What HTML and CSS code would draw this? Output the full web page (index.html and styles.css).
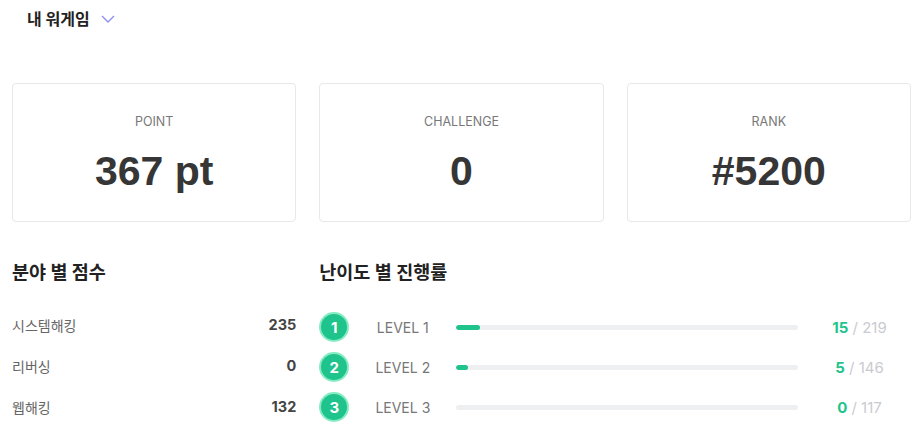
FILE: index.html
```html
<!DOCTYPE html>
<html lang="ko">
<head>
<meta charset="utf-8">
<link rel="stylesheet" href="styles.css">
</head>
<body>
<div class="page">
  <div class="header">
    <span class="title">내 워게임</span>
    <svg class="chev" width="14" height="8" viewBox="0 0 14 8"><path d="M1 1 L7 7 L13 1" fill="none" stroke="#8c8ef2" stroke-width="1.4"/></svg>
  </div>
  <div class="cards">
    <div class="card"><div class="label">POINT</div><div class="value">367 pt</div></div>
    <div class="card"><div class="label">CHALLENGE</div><div class="value">0</div></div>
    <div class="card"><div class="label">RANK</div><div class="value">#5200</div></div>
  </div>
  <div class="lower">
    <div class="field">
      <h3 class="sec">분야 별 점수</h3>
      <div class="frow"><span class="fname">시스템해킹</span><span class="fval">235</span></div>
      <div class="frow"><span class="fname">리버싱</span><span class="fval">0</span></div>
      <div class="frow"><span class="fname">웹해킹</span><span class="fval">132</span></div>
    </div>
    <div class="levels">
      <h3 class="sec">난이도 별 진행률</h3>
      <div class="lrow">
        <span class="badge">1</span><span class="lname">LEVEL 1</span>
        <div class="bar"><div class="fill" style="width:6.85%"></div></div>
        <span class="count"><b>15</b> / 219</span>
      </div>
      <div class="lrow">
        <span class="badge">2</span><span class="lname">LEVEL 2</span>
        <div class="bar"><div class="fill" style="width:3.42%"></div></div>
        <span class="count"><b>5</b> / 146</span>
      </div>
      <div class="lrow">
        <span class="badge">3</span><span class="lname">LEVEL 3</span>
        <div class="bar"><div class="fill" style="width:0%"></div></div>
        <span class="count"><b>0</b> / 117</span>
      </div>
    </div>
  </div>
</div>
</body>
</html>
```
FILE: styles.css
```css
* { box-sizing: border-box; }
body {
  margin: 0;
  background: #fff;
  font-family: Inter, "Noto Sans CJK KR", sans-serif;
  color: #333;
}
.page { padding: 0 10px 0 12px; }
.header {
  display: flex;
  align-items: center;
  gap: 11px;
  height: 36px;
  padding-left: 15px;
}
.title {
  font-size: 16px;
  font-weight: 700;
  color: #222;
}
.chev { margin-top: 1px; }
.cards {
  display: grid;
  grid-template-columns: repeat(3, 1fr);
  gap: 23px;
  margin-top: 47px;
}
.card {
  border: 1px solid #e8e8ea;
  border-radius: 4px;
  height: 139px;
  display: flex;
  flex-direction: column;
  align-items: center;
  padding-top: 30px;
}
.label {
  font-size: 12.5px;
  color: #777;
  line-height: 16px;
}
.value {
  font-family: "Liberation Sans", Arial, sans-serif;
  font-weight: 700;
  font-size: 41px;
  color: #363636;
  margin-top: 19px;
  line-height: 44px;
}
.lower {
  display: grid;
  grid-template-columns: repeat(3, 1fr);
  gap: 23px;
  margin-top: 38px;
}
.levels { grid-column: span 2; }
.sec {
  margin: 0;
  font-size: 18.5px;
  font-weight: 700;
  color: #222;
  line-height: 24px;
  height: 44px;
}
.frow {
  display: flex;
  justify-content: space-between;
  align-items: center;
  height: 41px;
}
.fname { font-size: 14px; color: #666; }
.fval { font-size: 14.5px; font-weight: 700; color: #444; }
.lrow {
  display: flex;
  align-items: center;
  height: 40px;
}
.lrow:first-of-type { margin-top: 3px; }
.badge {
  width: 30px;
  height: 30px;
  border-radius: 50%;
  background: #1fc48c;
  border: 2px solid #86ebc2;
  color: #fff;
  font-weight: 700;
  font-size: 15px;
  display: flex;
  align-items: center;
  justify-content: center;
}
.lname {
  width: 107px;
  text-align: center;
  font-size: 14px;
  color: #777;
}
.bar {
  flex: 1;
  height: 5px;
  border-radius: 3px;
  background: #eeeff1;
  overflow: hidden;
}
.fill {
  height: 100%;
  background: #1fc48c;
  border-radius: 3px;
}
.count {
  width: 113px;
  padding-left: 10px;
  text-align: center;
  font-size: 15px;
  color: #c9cbd0;
}
.count b { color: #1fc48c; font-weight: 700; }
```
